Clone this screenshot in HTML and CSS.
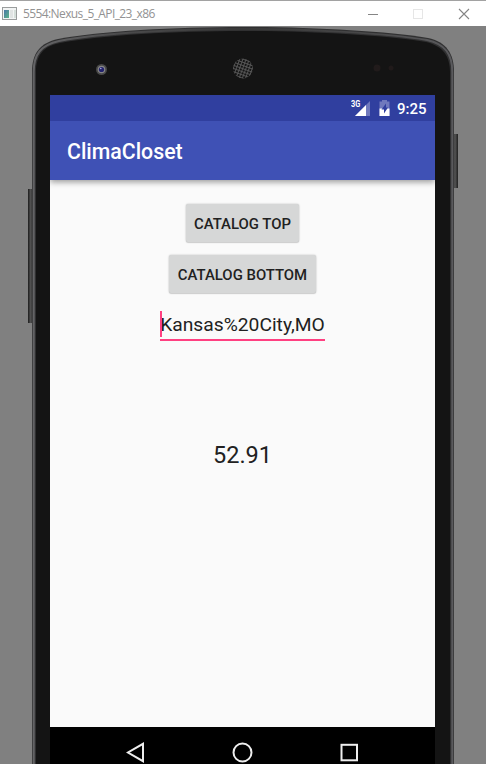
FILE: index.html
```html
<!DOCTYPE html>
<html lang="en">
<head>
<meta charset="utf-8">
<title>5554:Nexus_5_API_23_x86</title>
<link rel="stylesheet" href="styles.css">
</head>
<body>
<div class="window">
  <header class="titlebar">
    <svg class="app-icon" width="15" height="13" viewBox="0 0 15 13">
      <defs><linearGradient id="ico" x1="0" y1="0" x2="1" y2="1"><stop offset="0" stop-color="#4c78a8"/><stop offset="1" stop-color="#5cb588"/></linearGradient></defs>
      <rect x=".5" y=".5" width="14" height="12" fill="#f2f4f4" stroke="#9a9d9d"/>
      <rect x="2" y="3" width="5" height="8" fill="url(#ico)"/>
      <rect x="8" y="3" width="3" height="8" fill="#e0e4e3"/>
      <rect x="12" y="3" width="2" height="8" fill="#d5dfda"/>
    </svg>
    <span class="window-title">5554:Nexus_5_API_23_x86</span>
    <svg class="controls" width="102" height="12" viewBox="0 0 102 12" fill="none">
      <path d="M0 6.5h10" stroke="#858585"/>
      <rect x="45.5" y="1.5" width="9" height="9" stroke="#e6e6e6"/>
      <path d="M91 1l10 10M101 1L91 11" stroke="#858585" stroke-width="1.1"/>
    </svg>
  </header>
  <main class="desktop">
    <svg class="phone-body" width="486" height="738" viewBox="0 26 486 738">
      <defs>
        <linearGradient id="lbtn"><stop offset="0" stop-color="#1c1c1c"/><stop offset=".5" stop-color="#505050"/><stop offset="1" stop-color="#303030"/></linearGradient>
        <linearGradient id="rbtn"><stop offset="0" stop-color="#303030"/><stop offset=".4" stop-color="#555"/><stop offset="1" stop-color="#202020"/></linearGradient>
        <pattern id="mesh" width="3" height="3" patternUnits="userSpaceOnUse" patternTransform="rotate(20)"><rect width="3" height="3" fill="#555"/><rect width="2" height="2" fill="#151515"/></pattern>
        <linearGradient id="frame"><stop offset="0" stop-color="#646466"/><stop offset=".2" stop-color="#4c4c4d"/><stop offset=".5" stop-color="#383838"/><stop offset=".8" stop-color="#484849"/><stop offset="1" stop-color="#5a5a5d"/></linearGradient>
      </defs>
      <rect x="28" y="189" width="5" height="134" fill="url(#lbtn)"/>
      <rect x="453" y="134" width="5" height="54" fill="url(#rbtn)"/>
      <path d="M32 780V72C32 53 40 43 58 39C100 31 175 27 243 27C311 27 386 31 428 38C446 42 454 53 454 72V780Z" fill="#303031"/>
      <path d="M33.7 780V72C33.7 54 41 45 59 41C101 33 175 29 243 29C311 29 385 33 427 40C445 44 452.3 54 452.3 72V780" fill="none" stroke="url(#frame)" stroke-width="2"/>
      <path d="M36 780V72C36 56 43 46 60 43C102 35 175 31 243 31C311 31 384 35 426 42C443 46 450 56 450 72V780Z" fill="#141414"/>
      <circle cx="101.500" cy="69.500" r="5.500" fill="#484848"/>
      <circle cx="101.500" cy="69.500" r="3.800" fill="#858585"/>
      <circle cx="101.500" cy="69.500" r="2.600" fill="#22226c"/>
      <circle cx="100.800" cy="68.500" r=".8" fill="#a8a8df"/>
      <circle cx="243" cy="68.500" r="10" fill="url(#mesh)"/>
      <circle cx="377" cy="68" r="3.500" fill="#211b1b"/>
      <circle cx="391" cy="68" r="2.500" fill="#201a1a"/>
    </svg>
    <section class="screen">
      <div class="statusbar">
        <svg class="signal" width="20" height="17" viewBox="0 0 20 17">
          <path d="M19 1V16H4Z" fill="#7079bd"/>
          <path d="M15 5V16H4Z" fill="#fff"/>
        </svg>
        <span class="network">3G</span>
        <svg class="battery" width="11" height="16" viewBox="0 0 11 16">
          <path d="M3 0h5v1.500h2.500V16H.5V1.500H3Z" fill="#7079bd"/>
          <path d="M.5 8.500h10V16H.5Z" fill="#fff"/>
          <path d="M7 3.500L2.500 9.500h2.500v4l4-6H7Z" fill="#303f9f"/>
        </svg>
        <span class="clock">9:25</span>
      </div>
      <div class="appbar">ClimaCloset</div>
      <div class="content">
        <button class="btn">CATALOG TOP</button>
        <button class="btn">CATALOG BOTTOM</button>
        <div class="field">Kansas%20City,MO</div>
        <div class="reading">52.91</div>
      </div>
      <nav class="navbar">
        <svg width="385" height="37" viewBox="0 0 385 37" fill="none" stroke="#eee" stroke-width="2">
          <path d="M93 16.800V34.200L78 25.500Z"/>
          <circle cx="192.500" cy="25.500" r="9"/>
          <rect x="291.500" y="17.800" width="15.500" height="15.500"/>
        </svg>
      </nav>
    </section>
  </main>
</div>
</body>
</html>
```
FILE: styles.css
```css
* { box-sizing: border-box; }
body { margin: 0; font-family: Roboto, sans-serif; overflow: hidden; }
.window { width: 486px; height: 764px; display: flex; flex-direction: column; }
.titlebar {
  height: 26px; flex: none; display: flex; align-items: center;
  padding-left: 2px; background: #fff; border-top: 1px solid #a2a2a2;
}
.app-icon { flex: none; }
.window-title {
  margin-left: 6px; font: 12px/16px "Open Sans", sans-serif;
  letter-spacing: -0.6px; color: #929292; white-space: nowrap;
}
.controls { margin-left: auto; margin-right: 16px; }
.desktop {
  position: relative; flex: 1; min-height: 0; padding: 69px 51px 0 50px;
  display: flex; background: #808080;
}
.phone-body { position: absolute; left: 0; top: 0; }
.screen {
  position: relative; flex: 1; display: flex; flex-direction: column;
  background: #fafafa;
}
.statusbar {
  height: 26px; flex: none; display: flex; align-items: center;
  justify-content: flex-end; padding-right: 8.500px; background: #303f9f; color: #fff;
  position: relative;
}
.network {
  position: absolute; left: 301px; top: 4px;
  font: 700 9px/11px "Roboto", sans-serif;
  transform: scaleX(0.82); transform-origin: left;
}
.signal { margin-right: 8px; }
.battery { margin-right: 7px; }
.clock { font-size: 15px; font-weight: 500; line-height: 26px; padding-top: 1px; }
.appbar {
  height: 59px; flex: none; padding-left: 17px; line-height: 61px;
  background: #3f51b5; color: #fff; font-size: 21.300px; font-weight: 500;
  box-shadow: 0 2px 6px rgba(0, 0, 0, 0.4); clip-path: inset(0 0 -12px 0);
}
.content {
  flex: 1; display: flex; flex-direction: column; align-items: center;
  padding-top: 24px; color: #212121;
}
.btn {
  height: 38px; margin: 0 0 13px; padding: 1px 8.500px 0; border: 0;
  border-radius: 2px; background: #d6d7d7; color: #212121;
  font: 500 14.900px/38px Roboto, sans-serif; white-space: nowrap;
  box-shadow: 0 0 2px rgba(0, 0, 0, 0.25), 0 1px 1px rgba(0, 0, 0, 0.12);
}
.field {
  position: relative; height: 35px; padding-top: 7px; line-height: 24px;
  font-size: 19.250px; border-bottom: 2px solid #ff4081; white-space: nowrap;
}
.field::before {
  content: ""; position: absolute; left: 0; top: 5px; width: 2px;
  height: 26px; background: #ff4081;
}
.reading { margin-top: 99px; font-size: 23.500px; line-height: 30px; }
.navbar { height: 37px; flex: none; background: #000; }
.navbar svg { display: block; }
```
